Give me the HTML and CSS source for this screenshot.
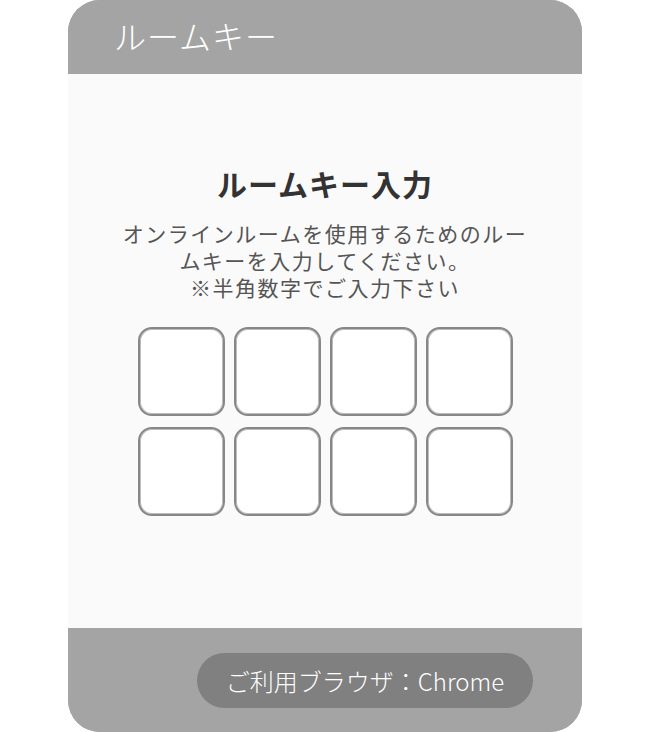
FILE: index.html
```html
<!DOCTYPE html>
<html lang="ja">
<head>
<meta charset="utf-8">
<title>ルームキー</title>
<link rel="stylesheet" href="styles.css">
</head>
<body>
<div class="card">
  <header class="card-header">ルームキー</header>
  <main class="card-body">
    <h1 class="title">ルームキー入力</h1>
    <p class="desc">オンラインルームを使用するためのルームキーを入力してください。<br>※半角数字でご入力下さい</p>
    <div class="keys">
      <div class="key"></div><div class="key"></div><div class="key"></div><div class="key"></div>
      <div class="key"></div><div class="key"></div><div class="key"></div><div class="key"></div>
    </div>
  </main>
  <footer class="card-footer">
    <div class="pill">ご利用ブラウザ：Chrome</div>
  </footer>
</div>
</body>
</html>
```

FILE: styles.css
```css
html, body {
  margin: 0;
  padding: 0;
  background: #ffffff;
}
body {
  font-family: "Noto Sans CJK JP", "Noto Sans", sans-serif;
}
.card {
  width: 514px;
  height: 732px;
  margin: 0 auto;
  border-radius: 32px;
  overflow: hidden;
  display: flex;
  flex-direction: column;
  background: #a4a4a4;
}
.card-header {
  height: 74px;
  box-sizing: border-box;
  flex: none;
  display: flex;
  align-items: center;
  padding-left: 46px;
  padding-bottom: 4px;
  color: #ffffff;
  font-size: 32px;
  letter-spacing: 1px;
  font-weight: 300;
  background: #a4a4a4;
}
.card-body {
  flex: 1;
  background: #fafafa;
  display: flex;
  flex-direction: column;
  align-items: center;
  padding-top: 91px;
}
.title {
  margin: 0;
  font-size: 30px;
  line-height: 36px;
  font-weight: 700;
  letter-spacing: 1px;
  color: #333333;
}
.desc {
  margin: 19px 0 0;
  width: 412px;
  text-align: center;
  font-size: 21px;
  letter-spacing: 1.5px;
  line-height: 27px;
  color: #555555;
}
.keys {
  margin-top: 26px;
  display: grid;
  grid-template-columns: repeat(4, 87px);
  grid-auto-rows: 89px;
  column-gap: 9px;
  row-gap: 11px;
}
.key {
  box-sizing: border-box;
  background: #ffffff;
  border: 2px solid #878787;
  border-radius: 14px;
  box-shadow: inset 0 0 0 1px #bcbcbc;
}
.card-footer {
  height: 104px;
  flex: none;
  display: flex;
  align-items: center;
  justify-content: flex-end;
  padding-right: 49px;
  background: #a4a4a4;
}
.pill {
  height: 55px;
  width: 336px;
  box-sizing: border-box;
  border-radius: 28px;
  background: #808080;
  color: #ffffff;
  font-size: 24px;
  font-weight: 300;
  display: flex;
  align-items: center;
  justify-content: center;
}
```
